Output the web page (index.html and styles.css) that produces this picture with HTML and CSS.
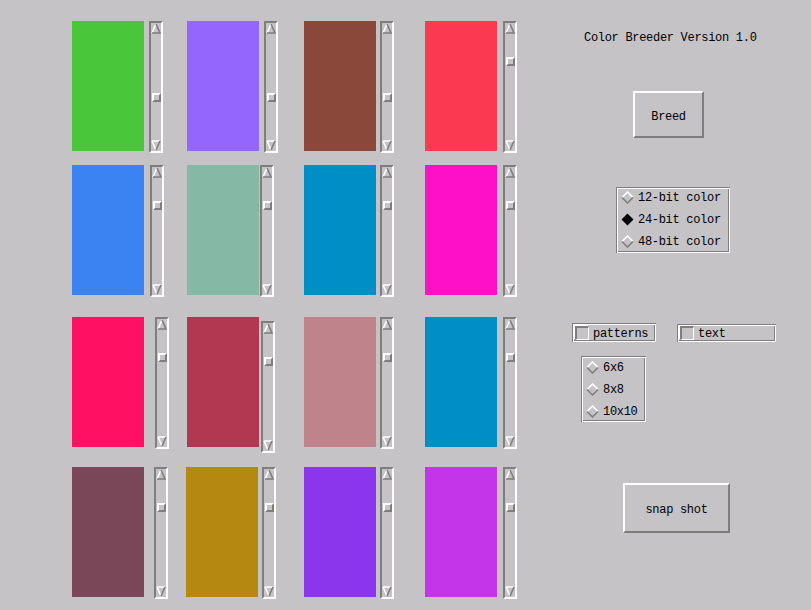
FILE: index.html
```html
<!DOCTYPE html>
<html>
<head>
<meta charset="utf-8">
<title>Color Breeder</title>
<link rel="stylesheet" href="styles.css">
</head>
<body>
<div class="app">
  <div class="swatches">
    <!-- row 1 -->
    <div class="cell"><div class="swatch c11"></div><div class="sb g5"><div class="arrow up"><svg width="10" height="12" viewBox="0 0 10 12"><path d="M5 1 L1 10" class="lt"/><path d="M5 1 L9 10 L1 10" class="dk"/></svg></div><div class="track"><div class="thumb low"></div></div><div class="arrow"><svg width="10" height="12" viewBox="0 0 10 12"><path d="M1 2 L9 2 M1 2 L5 11" class="lt"/><path d="M9 2 L5 11" class="dk"/></svg></div></div></div>
    <div class="cell"><div class="swatch c12"></div><div class="sb g5"><div class="arrow up"><svg width="10" height="12" viewBox="0 0 10 12"><path d="M5 1 L1 10" class="lt"/><path d="M5 1 L9 10 L1 10" class="dk"/></svg></div><div class="track"><div class="thumb low"></div></div><div class="arrow"><svg width="10" height="12" viewBox="0 0 10 12"><path d="M1 2 L9 2 M1 2 L5 11" class="lt"/><path d="M9 2 L5 11" class="dk"/></svg></div></div></div>
    <div class="cell"><div class="swatch c13"></div><div class="sb g4"><div class="arrow up"><svg width="10" height="12" viewBox="0 0 10 12"><path d="M5 1 L1 10" class="lt"/><path d="M5 1 L9 10 L1 10" class="dk"/></svg></div><div class="track"><div class="thumb low"></div></div><div class="arrow"><svg width="10" height="12" viewBox="0 0 10 12"><path d="M1 2 L9 2 M1 2 L5 11" class="lt"/><path d="M9 2 L5 11" class="dk"/></svg></div></div></div>
    <div class="cell"><div class="swatch c14"></div><div class="sb g6"><div class="arrow up"><svg width="10" height="12" viewBox="0 0 10 12"><path d="M5 1 L1 10" class="lt"/><path d="M5 1 L9 10 L1 10" class="dk"/></svg></div><div class="track"><div class="thumb"></div></div><div class="arrow"><svg width="10" height="12" viewBox="0 0 10 12"><path d="M1 2 L9 2 M1 2 L5 11" class="lt"/><path d="M9 2 L5 11" class="dk"/></svg></div></div></div>
    <!-- row 2 -->
    <div class="cell"><div class="swatch c21"></div><div class="sb g6"><div class="arrow up"><svg width="10" height="12" viewBox="0 0 10 12"><path d="M5 1 L1 10" class="lt"/><path d="M5 1 L9 10 L1 10" class="dk"/></svg></div><div class="track"><div class="thumb"></div></div><div class="arrow"><svg width="10" height="12" viewBox="0 0 10 12"><path d="M1 2 L9 2 M1 2 L5 11" class="lt"/><path d="M9 2 L5 11" class="dk"/></svg></div></div></div>
    <div class="cell"><div class="swatch c22"></div><div class="sb g1"><div class="arrow up"><svg width="10" height="12" viewBox="0 0 10 12"><path d="M5 1 L1 10" class="lt"/><path d="M5 1 L9 10 L1 10" class="dk"/></svg></div><div class="track"><div class="thumb"></div></div><div class="arrow"><svg width="10" height="12" viewBox="0 0 10 12"><path d="M1 2 L9 2 M1 2 L5 11" class="lt"/><path d="M9 2 L5 11" class="dk"/></svg></div></div></div>
    <div class="cell"><div class="swatch c23"></div><div class="sb g4"><div class="arrow up"><svg width="10" height="12" viewBox="0 0 10 12"><path d="M5 1 L1 10" class="lt"/><path d="M5 1 L9 10 L1 10" class="dk"/></svg></div><div class="track"><div class="thumb"></div></div><div class="arrow"><svg width="10" height="12" viewBox="0 0 10 12"><path d="M1 2 L9 2 M1 2 L5 11" class="lt"/><path d="M9 2 L5 11" class="dk"/></svg></div></div></div>
    <div class="cell"><div class="swatch c24"></div><div class="sb g6"><div class="arrow up"><svg width="10" height="12" viewBox="0 0 10 12"><path d="M5 1 L1 10" class="lt"/><path d="M5 1 L9 10 L1 10" class="dk"/></svg></div><div class="track"><div class="thumb"></div></div><div class="arrow"><svg width="10" height="12" viewBox="0 0 10 12"><path d="M1 2 L9 2 M1 2 L5 11" class="lt"/><path d="M9 2 L5 11" class="dk"/></svg></div></div></div>
    <!-- row 3 -->
    <div class="cell"><div class="swatch c31"></div><div class="sb g11"><div class="arrow up"><svg width="10" height="12" viewBox="0 0 10 12"><path d="M5 1 L1 10" class="lt"/><path d="M5 1 L9 10 L1 10" class="dk"/></svg></div><div class="track"><div class="thumb"></div></div><div class="arrow"><svg width="10" height="12" viewBox="0 0 10 12"><path d="M1 2 L9 2 M1 2 L5 11" class="lt"/><path d="M9 2 L5 11" class="dk"/></svg></div></div></div>
    <div class="cell"><div class="swatch c32"></div><div class="sb g2 drop"><div class="arrow up"><svg width="10" height="12" viewBox="0 0 10 12"><path d="M5 1 L1 10" class="lt"/><path d="M5 1 L9 10 L1 10" class="dk"/></svg></div><div class="track"><div class="thumb"></div></div><div class="arrow"><svg width="10" height="12" viewBox="0 0 10 12"><path d="M1 2 L9 2 M1 2 L5 11" class="lt"/><path d="M9 2 L5 11" class="dk"/></svg></div></div></div>
    <div class="cell"><div class="swatch c33"></div><div class="sb g4"><div class="arrow up"><svg width="10" height="12" viewBox="0 0 10 12"><path d="M5 1 L1 10" class="lt"/><path d="M5 1 L9 10 L1 10" class="dk"/></svg></div><div class="track"><div class="thumb"></div></div><div class="arrow"><svg width="10" height="12" viewBox="0 0 10 12"><path d="M1 2 L9 2 M1 2 L5 11" class="lt"/><path d="M9 2 L5 11" class="dk"/></svg></div></div></div>
    <div class="cell"><div class="swatch c34"></div><div class="sb g6"><div class="arrow up"><svg width="10" height="12" viewBox="0 0 10 12"><path d="M5 1 L1 10" class="lt"/><path d="M5 1 L9 10 L1 10" class="dk"/></svg></div><div class="track"><div class="thumb"></div></div><div class="arrow"><svg width="10" height="12" viewBox="0 0 10 12"><path d="M1 2 L9 2 M1 2 L5 11" class="lt"/><path d="M9 2 L5 11" class="dk"/></svg></div></div></div>
    <!-- row 4 -->
    <div class="cell"><div class="swatch c41"></div><div class="sb g10"><div class="arrow up"><svg width="10" height="12" viewBox="0 0 10 12"><path d="M5 1 L1 10" class="lt"/><path d="M5 1 L9 10 L1 10" class="dk"/></svg></div><div class="track"><div class="thumb"></div></div><div class="arrow"><svg width="10" height="12" viewBox="0 0 10 12"><path d="M1 2 L9 2 M1 2 L5 11" class="lt"/><path d="M9 2 L5 11" class="dk"/></svg></div></div></div>
    <div class="cell"><div class="swatch c42 shift"></div><div class="sb g4"><div class="arrow up"><svg width="10" height="12" viewBox="0 0 10 12"><path d="M5 1 L1 10" class="lt"/><path d="M5 1 L9 10 L1 10" class="dk"/></svg></div><div class="track"><div class="thumb"></div></div><div class="arrow"><svg width="10" height="12" viewBox="0 0 10 12"><path d="M1 2 L9 2 M1 2 L5 11" class="lt"/><path d="M9 2 L5 11" class="dk"/></svg></div></div></div>
    <div class="cell"><div class="swatch c43"></div><div class="sb g4"><div class="arrow up"><svg width="10" height="12" viewBox="0 0 10 12"><path d="M5 1 L1 10" class="lt"/><path d="M5 1 L9 10 L1 10" class="dk"/></svg></div><div class="track"><div class="thumb"></div></div><div class="arrow"><svg width="10" height="12" viewBox="0 0 10 12"><path d="M1 2 L9 2 M1 2 L5 11" class="lt"/><path d="M9 2 L5 11" class="dk"/></svg></div></div></div>
    <div class="cell"><div class="swatch c44"></div><div class="sb g6"><div class="arrow up"><svg width="10" height="12" viewBox="0 0 10 12"><path d="M5 1 L1 10" class="lt"/><path d="M5 1 L9 10 L1 10" class="dk"/></svg></div><div class="track"><div class="thumb"></div></div><div class="arrow"><svg width="10" height="12" viewBox="0 0 10 12"><path d="M1 2 L9 2 M1 2 L5 11" class="lt"/><path d="M9 2 L5 11" class="dk"/></svg></div></div></div>
  </div>

  <div class="panel">
    <div class="title">Color Breeder Version 1.0</div>
    <div class="button breed">Breed</div>
    <div class="group depth">
      <div class="radio"><svg class="dia" width="13" height="13" viewBox="0 0 13 13"><path d="M1 6.5 L6.5 1 L12 6.5" class="lt2"/><path d="M1 6.5 L6.5 12 L12 6.5" class="dk2"/></svg><span>12-bit color</span></div>
      <div class="radio"><svg class="dia" width="13" height="13" viewBox="0 0 13 13"><path d="M0.5 6.5 L6.5 0.5 L12.5 6.5 L6.5 12.5 Z" fill="#000"/></svg><span>24-bit color</span></div>
      <div class="radio"><svg class="dia" width="13" height="13" viewBox="0 0 13 13"><path d="M1 6.5 L6.5 1 L12 6.5" class="lt2"/><path d="M1 6.5 L6.5 12 L12 6.5" class="dk2"/></svg><span>48-bit color</span></div>
    </div>
    <div class="checks">
      <div class="check patterns"><span class="box"></span><span>patterns</span></div>
      <div class="check textbox"><span class="box"></span><span>text</span></div>
    </div>
    <div class="group size">
      <div class="radio"><svg class="dia" width="13" height="13" viewBox="0 0 13 13"><path d="M1 6.5 L6.5 1 L12 6.5" class="lt2"/><path d="M1 6.5 L6.5 12 L12 6.5" class="dk2"/></svg><span>6x6</span></div>
      <div class="radio"><svg class="dia" width="13" height="13" viewBox="0 0 13 13"><path d="M1 6.5 L6.5 1 L12 6.5" class="lt2"/><path d="M1 6.5 L6.5 12 L12 6.5" class="dk2"/></svg><span>8x8</span></div>
      <div class="radio"><svg class="dia" width="13" height="13" viewBox="0 0 13 13"><path d="M1 6.5 L6.5 1 L12 6.5" class="lt2"/><path d="M1 6.5 L6.5 12 L12 6.5" class="dk2"/></svg><span>10x10</span></div>
    </div>
    <div class="button snap">snap shot</div>
  </div>
</div>
</body>
</html>
```

FILE: styles.css
```css
html, body {
  margin: 0;
  padding: 0;
  background: #c5c3c6;
  width: 811px;
  height: 610px;
  overflow: hidden;
  font-family: "Liberation Mono", "DejaVu Sans Mono", monospace;
  font-size: 12px;
  letter-spacing: -0.3px;
  color: #000;
}

.app {
  display: flex;
  align-items: flex-start;
}

.swatches {
  display: grid;
  grid-template-columns: 115px 117px 121px 93px;
  grid-template-rows: 144px 152px 150px 143px;
  padding: 21px 0 0 72px;
  width: 446px;
}

.cell {
  display: flex;
  align-items: flex-start;
}

.swatch {
  width: 72px;
  height: 130px;
  flex: none;
}
.swatch.shift { margin-left: -1px; }

.c11 { background: #4ac63b; }
.c12 { background: #9566fe; }
.c13 { background: #8a483a; }
.c14 { background: #fb3a52; }
.c21 { background: #3b83f0; }
.c22 { background: #85b9a5; }
.c23 { background: #008ec7; }
.c24 { background: #fe10c9; }
.c31 { background: #fe1063; }
.c32 { background: #b23750; }
.c33 { background: #bf838c; }
.c34 { background: #008ec7; }
.c41 { background: #7a4759; }
.c42 { background: #b58910; }
.c43 { background: #8b36ec; }
.c44 { background: #c435ea; }

/* scrollbar */
.sb {
  flex: none;
  width: 10px;
  height: 128px;
  border-style: solid;
  border-width: 2px;
  border-color: #7e7f7c #ffffff #ffffff #7e7f7c;
  display: flex;
  flex-direction: column;
}
.sb.g1 { margin-left: 1px; }
.sb.g2 { margin-left: 2px; }
.sb.g4 { margin-left: 4px; }
.sb.g5 { margin-left: 5px; }
.sb.g6 { margin-left: 6px; }
.sb.g10 { margin-left: 10px; }
.sb.g11 { margin-left: 11px; }
.sb.drop { margin-top: 4px; }

.arrow {
  height: 12px;
  flex: none;
  display: flex;
}
.arrow svg { display: block; }
.lt { fill: none; stroke: #ffffff; stroke-width: 1.6; }
.dk { fill: none; stroke: #7e7f7c; stroke-width: 1.6; }

.track {
  flex: 1;
}
.thumb {
  width: 5px;
  height: 5px;
  margin-top: 22px;
  margin-left: 1px;
  border-style: solid;
  border-width: 2px;
  border-color: #ffffff #7e7f7c #7e7f7c #ffffff;
}
.thumb.low { margin-top: 58px; }

/* right panel */
.panel {
  margin-left: 47px;
  width: 246px;
  display: flex;
  flex-direction: column;
  align-items: flex-start;
}

.title {
  margin: 32px 0 0 19px;
  line-height: 13px;
  white-space: pre;
}

.button {
  display: flex;
  align-items: center;
  justify-content: center;
  border-style: solid;
  border-width: 2px;
  border-color: #ffffff #7e7f7c #7e7f7c #ffffff;
  box-sizing: border-box;
}
.breed {
  margin: 46px 0 0 68px;
  width: 71px;
  height: 47px;
  padding-top: 5px;
}
.snap {
  margin: 61px 0 0 58px;
  width: 107px;
  height: 50px;
  padding-top: 3px;
}

.group {
  display: flex;
  flex-direction: column;
  gap: 2px;
  box-shadow: inset 1px 1px 0 #7e7f7c, inset -1px -1px 0 #ffffff,
              inset 2px 2px 0 #ffffff, inset -2px -2px 0 #7e7f7c;
}
.depth {
  margin: 49px 0 0 51px;
  width: 114px;
  height: 66px;
}
.size {
  margin: 14px 0 0 16px;
  width: 65px;
  height: 66px;
  padding-top: 1px;
  box-sizing: border-box;
}

.radio {
  height: 20px;
  display: flex;
  align-items: center;
  padding-left: 5px;
  white-space: pre;
}
.radio span { padding-top: 2px; }
.dia { flex: none; margin-right: 4px; display: block; }
.lt2 { fill: none; stroke: #ffffff; stroke-width: 1.6; }
.dk2 { fill: none; stroke: #7e7f7c; stroke-width: 1.6; }

.checks {
  display: flex;
  align-items: flex-start;
  margin-top: 70px;
}
.check {
  display: flex;
  align-items: center;
  box-shadow: inset 1px 1px 0 #7e7f7c, inset -1px -1px 0 #ffffff,
              inset 2px 2px 0 #ffffff, inset -2px -2px 0 #7e7f7c;
  white-space: pre;
}
.check span:last-child { padding-top: 2px; }
.patterns {
  margin-left: 7px;
  width: 84px;
  height: 19px;
  padding-left: 3px;
  box-sizing: border-box;
}
.textbox {
  margin: 1px 0 0 21px;
  width: 99px;
  height: 18px;
  padding-left: 3px;
  box-sizing: border-box;
}
.box {
  width: 11px;
  height: 11px;
  flex: none;
  margin-right: 4px;
  border-style: solid;
  border-width: 2px 1px 1px 2px;
  border-color: #7e7f7c #ffffff #ffffff #7e7f7c;
  box-shadow: -1px -1px 0 #ffffff;
}
```
